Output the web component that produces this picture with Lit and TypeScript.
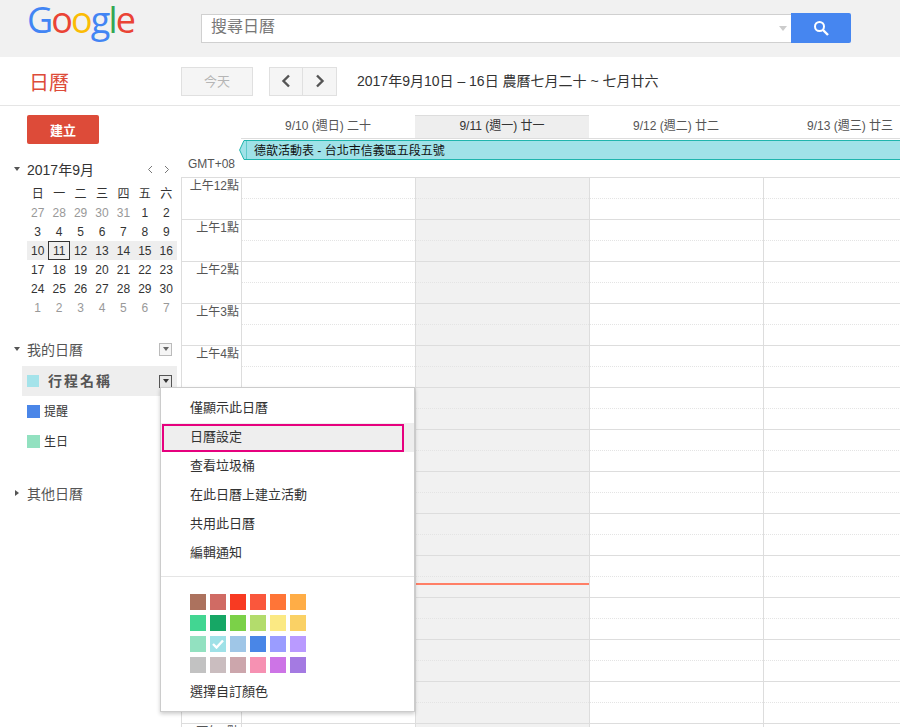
import { LitElement, html, css } from 'lit';
import { customElement } from 'lit/decorators.js';

const DAYS = [
  { label: '9/10 (週日) 二十', today: false },
  { label: '9/11 (週一) 廿一', today: true },
  { label: '9/12 (週二) 廿二', today: false },
  { label: '9/13 (週三) 廿三', today: false },
];

const WEEKDAYS = ['日', '一', '二', '三', '四', '五', '六'];

const MONTH = [
  [27, 28, 29, 30, 31, 1, 2],
  [3, 4, 5, 6, 7, 8, 9],
  [10, 11, 12, 13, 14, 15, 16],
  [17, 18, 19, 20, 21, 22, 23],
  [24, 25, 26, 27, 28, 29, 30],
  [1, 2, 3, 4, 5, 6, 7],
];

const HOURS = ['上午12點', '上午1點', '上午2點', '上午3點', '上午4點', '上午5點', '上午6點', '上午7點',
  '上午8點', '上午9點', '上午10點', '上午11點', '下午12點', '下午1點'];

const MENU = ['僅顯示此日曆', '日曆設定', '查看垃圾桶', '在此日曆上建立活動', '共用此日曆', '編輯通知'];

const COLORS = [
  '#ac725e', '#d06b64', '#f83a22', '#fa573c', '#ff7537', '#ffad46',
  '#42d692', '#16a765', '#7bd148', '#b3dc6c', '#fbe983', '#fad165',
  '#92e1c0', '#9fe1e7', '#9fc6e7', '#4986e7', '#9a9cff', '#b99aff',
  '#c2c2c2', '#cabdbf', '#cca6ac', '#f691b2', '#cd74e6', '#a47ae2',
];

@customElement('app-root')
export class AppRoot extends LitElement {
  static styles = css`
    :host {
      display: block;
      position: relative;
      height: 727px;
      overflow: hidden;
      background: #fff;
      color: #333;
      font-family: 'Liberation Sans', 'Noto Sans CJK TC', sans-serif;
      font-size: 12px;
    }
    .top {
      display: flex;
      align-items: center;
      height: 57px;
      background: #f1f1f1;
    }
    .logo {
      align-self: flex-start;
      width: 201px;
      padding-left: 27px;
      box-sizing: border-box;
      font-family: 'Open Sans', sans-serif;
      font-size: 36px;
      line-height: 40px;
      letter-spacing: -1.9px;
    }
    .search {
      display: flex;
      align-items: center;
      justify-content: flex-end;
      box-sizing: border-box;
      width: 590px;
      height: 29px;
      padding: 0 4px 0 9px;
      background: #fff;
      border: 1px solid #d0d0d0;
      border-right: 0;
      margin-top: -1px;
    }
    .search span {
      flex: 1;
      font-size: 16px;
      line-height: 20px;
      margin-top: -3px;
      color: #777;
    }
    .search i {
      border: 4px solid transparent;
      border-top: 5px solid #ccc;
      border-bottom: 0;
    }
    .search-btn {
      display: flex;
      align-items: center;
      justify-content: center;
      width: 60px;
      height: 30px;
      margin-top: -1px;
      background: #4686f0;
      border-radius: 0 2px 2px 0;
    }
    .bar {
      display: flex;
      align-items: center;
      box-sizing: border-box;
      height: 49px;
      border-bottom: 1px solid #e5e5e5;
    }
    .brand {
      width: 181px;
      padding-left: 29px;
      box-sizing: border-box;
      font-size: 20px;
      line-height: 28px;
      margin-top: 3px;
      color: #dd4b39;
    }
    .btn {
      display: flex;
      align-items: center;
      justify-content: center;
      box-sizing: border-box;
      height: 29px;
      background: #f5f5f5;
      border: 1px solid #e0e0e0;
    }
    .today-btn {
      width: 72px;
      padding-bottom: 2px;
      color: #b5b5b5;
      font-size: 13px;
      margin-right: 16px;
    }
    .nav {
      width: 34px;
    }
    .nav + .nav {
      border-left: 0;
      margin-right: 20px;
    }
    .range {
      font-size: 14px;
      color: #333;
      margin-top: -3px;
    }
    .body {
      display: flex;
    }
    .side {
      box-sizing: border-box;
      width: 181px;
      padding-top: 9px;
      flex: none;
    }
    .create {
      display: flex;
      align-items: center;
      justify-content: center;
      width: 72px;
      height: 29px;
      margin-left: 27px;
      background: #dd4b39;
      border-radius: 2px;
      color: #fff;
      font-size: 13px;
      font-weight: 700;
    }
    .mini-head {
      display: flex;
      align-items: center;
      height: 20px;
      margin-top: 15px;
      padding-left: 14px;
      font-size: 14px;
    }
    .mini-head .title {
      flex: 1;
      margin-left: 1px;
    }
    .mini-head svg {
      margin-right: 11px;
    }
    .caret {
      width: 0;
      height: 0;
      margin-right: 6px;
      border: 3.5px solid transparent;
      border-top: 4px solid #555;
      border-bottom: 0;
    }
    .caret.closed {
      margin-left: 1px;
      margin-right: 7px;
      border: 3.5px solid transparent;
      border-left: 4px solid #555;
      border-right: 0;
    }
    .mini {
      display: grid;
      grid-template-columns: repeat(7, 1fr);
      grid-auto-rows: 19px;
      width: 150px;
      margin: 5px 0 0 27px;
      text-align: center;
      line-height: 20px;
      color: #333;
    }
    .mini .week {
      background: #eee;
    }
    .mini .off {
      color: #999;
    }
    .mini .sel {
      box-sizing: border-box;
      border: 1px solid #333;
      line-height: 18px;
    }
    .group {
      display: flex;
      align-items: center;
      box-sizing: border-box;
      height: 20px;
      padding: 0 0 2px 14px;
      font-size: 14px;
      color: #555;
    }
    .group .title {
      flex: 1;
      margin-left: 1px;
    }
    .group.mine {
      margin-top: 23px;
    }
    .group.other {
      margin-top: 28px;
    }
    .menu-box {
      display: flex;
      align-items: center;
      justify-content: center;
      box-sizing: border-box;
      width: 13px;
      height: 13px;
      margin-right: 9px;
      background: #f5f5f5;
      border: 1px solid #bbb;
    }
    .menu-box i {
      border: 3.5px solid transparent;
      border-top: 4px solid #666;
      border-bottom: 0;
    }
    .menu-box.on {
      border-color: #555;
      background: #e8e8e8;
    }
    .menu-box.on i {
      border-top-color: #333;
    }
    .cal {
      display: flex;
      align-items: center;
      box-sizing: border-box;
      height: 30px;
      padding: 0 0 2px 27px;
      color: #333;
    }
    .cal b {
      width: 13px;
      height: 13px;
      margin: 2px 4px 0 0;
    }
    .cal.active {
      width: 155px;
      margin: 6px 0 0 22px;
      padding-left: 5px;
      background: #eee;
      justify-content: space-between;
    }
    .cal.active b {
      width: 12px;
      height: 12px;
      margin-right: 9px;
    }
    .cal.active span {
      flex: 1;
      font-size: 14px;
      font-weight: 700;
      letter-spacing: 2px;
      color: #555;
    }
    .cal.active .menu-box {
      margin: 2px 5px 0 0;
    }
    .main {
      flex: 1;
      padding-top: 9px;
      min-width: 0;
    }
    .heads,
    .allday,
    .grid {
      display: grid;
      grid-template-columns: 60px repeat(4, 174px);
    }
    .head {
      height: 23px;
      line-height: 23px;
      text-align: center;
      color: #555;
      border-bottom: 1px solid #ddd;
    }
    .head.blank {
      border-bottom: 0;
    }
    .head.on {
      box-sizing: content-box;
      height: 22px;
      line-height: 21px;
      background: #eee;
      border-top: 1px solid #ddd;
      color: #333;
    }
    .allday {
      grid-template-rows: 21px 11px;
      height: 33px;
    }
    .gmt {
      grid-row: 1 / 3;
      align-self: end;
      padding-left: 7px;
      color: #555;
    }
    .slot {
      grid-row: 1 / 3;
      border-left: 1px solid #ddd;
      border-bottom: 1px solid #ddd;
    }
    .slot.on {
      background: #f1f1f1;
    }
    .event {
      grid-row: 1;
      grid-column: 2 / 6;
      display: flex;
      margin: 1px 0 0 -2px;
      height: 20px;
      z-index: 1;
    }
    .event div {
      flex: 1;
      box-sizing: border-box;
      padding-left: 7px;
      background: #a0e2e8;
      border: solid #1fb5ad;
      border-width: 1px 0;
      color: #111;
      line-height: 20px;
      white-space: nowrap;
    }
    .grid {
      margin-top: 5px;
      border-top: 1px solid #ddd;
    }
    .time {
      border-left: 1px solid #ddd;
    }
    .time div {
      box-sizing: border-box;
      height: 42px;
      padding-right: 2px;
      text-align: right;
      line-height: 16px;
      border-bottom: 1px solid #ddd;
      color: #555;
    }
    .day {
      position: relative;
      border-left: 1px solid #ddd;
    }
    .day.on {
      background: #f1f1f1;
    }
    .cell {
      box-sizing: border-box;
      height: 42px;
      border-bottom: 1px solid #ddd;
    }
    .cell::before {
      content: '';
      display: block;
      height: 20px;
      border-bottom: 1px dotted #e4e4e4;
    }
    .now {
      position: absolute;
      top: 405px;
      left: 0;
      right: 0;
      height: 2px;
      background: #ff7f66;
    }
    .popup {
      position: absolute;
      left: 160px;
      top: 387px;
      box-sizing: border-box;
      width: 255px;
      height: 325px;
      padding-top: 6px;
      background: #fff;
      border: 1px solid #ccc;
      box-shadow: 0 2px 4px rgba(0, 0, 0, 0.2);
      font-size: 13px;
      color: #333;
      z-index: 2;
    }
    .item {
      position: relative;
      height: 29px;
      padding-left: 29px;
      line-height: 28px;
    }
    .item.hover {
      background: #eee;
    }
    .item.hover::after {
      content: '';
      position: absolute;
      left: 1px;
      right: 10px;
      top: 1px;
      bottom: 0;
      border: 2px solid #e6007e;
    }
    .sep {
      height: 1px;
      margin-top: 8px;
      background: #e5e5e5;
    }
    .colors {
      display: grid;
      grid-template-columns: repeat(6, 16px);
      grid-auto-rows: 16px;
      gap: 5px 4px;
      margin: 17px 0 5px 29px;
    }
    .colors span {
      display: flex;
      align-items: center;
      justify-content: center;
    }
  `;

  render() {
    return html`
      <div class="top">
        <div class="logo"><span style="color:#4285f4">G</span><span style="color:#ea4335">o</span><span style="color:#fbbc05">o</span><span style="color:#4285f4">g</span><span style="color:#34a853">l</span><span style="color:#ea4335">e</span></div>
        <div class="search"><span>搜尋日曆</span><i></i></div>
        <div class="search-btn">
          <svg width="16" height="16" viewBox="0 0 16 16" fill="none" stroke="#fff">
            <circle cx="6.5" cy="6.5" r="4.5" stroke-width="2"></circle>
            <path d="M10 10l5 5" stroke-width="2.4"></path>
          </svg>
        </div>
      </div>
      <div class="bar">
        <div class="brand">日曆</div>
        <div class="btn today-btn">今天</div>
        <div class="btn nav">
          <svg width="10" height="14" viewBox="0 0 10 14" fill="none" stroke="#555" stroke-width="2.4"><path d="M8 1.5L2.5 7 8 12.5"></path></svg>
        </div>
        <div class="btn nav">
          <svg width="10" height="14" viewBox="0 0 10 14" fill="none" stroke="#555" stroke-width="2.4"><path d="M2 1.5L7.5 7 2 12.5"></path></svg>
        </div>
        <div class="range">2017年9月10日 – 16日 農曆七月二十 ~ 七月廿六</div>
      </div>
      <div class="body">
        ${this.renderSide()}
        ${this.renderMain()}
      </div>
      ${this.renderPopup()}
    `;
  }

  renderSide() {
    return html`
      <div class="side">
        <div class="create">建立</div>
        <div class="mini-head">
          <i class="caret"></i>
          <span class="title">2017年9月</span>
          <svg width="6" height="9" viewBox="0 0 6 9" fill="none" stroke="#777"><path d="M5 1L1.5 4.5 5 8"></path></svg>
          <svg width="6" height="9" viewBox="0 0 6 9" fill="none" stroke="#777"><path d="M1 1l3.5 3.5L1 8"></path></svg>
        </div>
        <div class="mini">
          ${WEEKDAYS.map((d) => html`<div>${d}</div>`)}
          ${MONTH.map((week, r) =>
            week.map((d) => {
              const off = (r === 0 && d > 20) || r === 5;
              const cls = [off ? 'off' : '', r === 2 ? 'week' : '', r === 2 && d === 11 ? 'sel' : ''].join(' ');
              return html`<div class=${cls}>${d}</div>`;
            })
          )}
        </div>
        <div class="group mine">
          <i class="caret"></i>
          <span class="title">我的日曆</span>
          <div class="menu-box"><i></i></div>
        </div>
        <div class="cal active">
          <b style="background:#a4e3ea"></b>
          <span>行程名稱</span>
          <div class="menu-box on"><i></i></div>
        </div>
        <div class="cal"><b style="background:#4a86e8"></b>提醒</div>
        <div class="cal"><b style="background:#92e1c0"></b>生日</div>
        <div class="group other">
          <i class="caret closed"></i>
          <span class="title">其他日曆</span>
        </div>
      </div>
    `;
  }

  renderMain() {
    const cells = HOURS.map(() => html`<div class="cell"></div>`);
    return html`
      <div class="main">
        <div class="heads">
          <div class="head blank"></div>
          ${DAYS.map((d) => html`<div class="head ${d.today ? 'on' : ''}">${d.label}</div>`)}
        </div>
        <div class="allday">
          <div class="gmt">GMT+08</div>
          ${DAYS.map((d) => html`<div class="slot ${d.today ? 'on' : ''}"></div>`)}
          <div class="event">
            <svg width="8" height="20" viewBox="0 0 8 20" style="flex:none">
              <path d="M8 .5H5L.6 10 5 19.5H8z" fill="#a0e2e8" stroke="#1fb5ad"></path>
            </svg>
            <div>德歆活動表 - 台北市信義區五段五號</div>
          </div>
        </div>
        <div class="grid">
          <div class="time">${HOURS.map((h) => html`<div>${h}</div>`)}</div>
          ${DAYS.map(
            (d) => html`<div class="day ${d.today ? 'on' : ''}">
              ${cells}
              ${d.today ? html`<div class="now"></div>` : ''}
            </div>`
          )}
        </div>
      </div>
    `;
  }

  renderPopup() {
    return html`
      <div class="popup">
        ${MENU.map((m, i) => html`<div class="item ${i === 1 ? 'hover' : ''}">${m}</div>`)}
        <div class="sep"></div>
        <div class="colors">
          ${COLORS.map(
            (c, i) => html`<span style="background:${c}">
              ${i === 13
                ? html`<svg width="12" height="10" viewBox="0 0 12 10" fill="none" stroke="#fff" stroke-width="2.4"><path d="M1 5l3.5 3.5L11 1.5"></path></svg>`
                : ''}
            </span>`
          )}
        </div>
        <div class="item">選擇自訂顏色</div>
      </div>
    `;
  }
}
